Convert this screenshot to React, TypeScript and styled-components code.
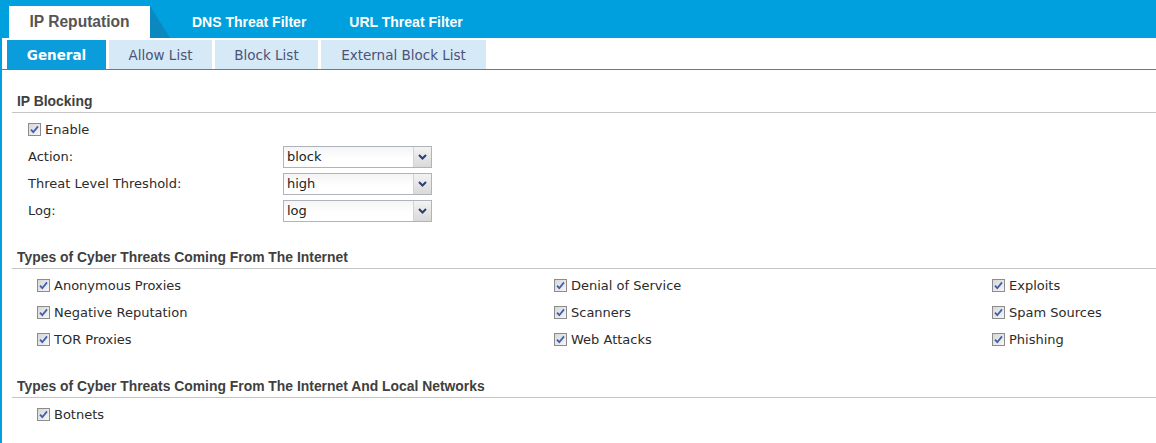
import React from 'react';
import styled, { createGlobalStyle } from 'styled-components';

const BLUE = '#009fdd';

const GlobalStyle = createGlobalStyle`
  html, body {
    margin: 0;
    padding: 0;
    background: #ffffff;
  }
  body {
    font-family: "DejaVu Sans", "Liberation Sans", sans-serif;
    font-size: 13px;
    color: #2b2b2b;
  }
`;

const Page = styled.div`
  min-height: 443px;
  border-left: 2px solid ${BLUE};
  box-sizing: border-box;
  background: #ffffff;
`;

const TopBar = styled.div`
  display: flex;
  align-items: flex-end;
  height: 38px;
  padding-left: 7px;
  background: ${BLUE};
`;

const MainTab = styled.div<{ active?: boolean }>`
  display: flex;
  align-items: center;
  justify-content: center;
  height: ${(p) => (p.active ? '32px' : '38px')};
  width: ${(p) => (p.active ? '141px' : 'auto')};
  padding: ${(p) => (p.active ? '0' : '6px 21px 0 22px')};
  box-sizing: border-box;
  background: ${(p) => (p.active ? '#ffffff' : 'transparent')};
  color: ${(p) => (p.active ? '#555555' : '#ffffff')};
  font-family: "Liberation Sans", sans-serif;
  font-weight: bold;
  font-size: ${(p) => (p.active ? '15.6px' : '14px')};
`;

const TabSlant = styled.div`
  width: 20px;
  height: 32px;
  background: #0c88c0;
  clip-path: polygon(0 0, 100% 100%, 0 100%);
`;

const SubTabBar = styled.div`
  display: flex;
  gap: 3px;
  height: 29px;
  margin-top: 2px;
  padding-left: 5px;
  border-bottom: 1px solid #1f91cb;
`;

const SubTab = styled.div<{ active?: boolean; w: number }>`
  display: flex;
  align-items: center;
  justify-content: center;
  width: ${(p) => p.w}px;
  background: ${(p) => (p.active ? '#0a9cdb' : '#d6e9f7')};
  color: ${(p) => (p.active ? '#ffffff' : '#4b5378')};
  font-weight: ${(p) => (p.active ? 'bold' : 'normal')};
  font-size: 13.5px;
`;

const Section = styled.section`
  margin: 20px 0 0 10px;
  & + & {
    margin-top: 22px;
  }
`;

const SectionTitle = styled.div`
  height: 22px;
  line-height: 22px;
  padding-left: 5px;
  border-bottom: 1px solid #c4c4c4;
  font-family: "Liberation Sans", sans-serif;
  font-weight: bold;
  font-size: 13.9px;
  color: #404040;
`;

const SectionBody = styled.div<{ indent: number }>`
  padding: 3px 0 0 ${(p) => p.indent}px;
`;

const Row = styled.div`
  display: flex;
  align-items: center;
  height: 27px;
`;

const FieldLabel = styled.div`
  width: 255px;
`;

const SelectBox = styled.div`
  display: flex;
  align-items: stretch;
  width: 149px;
  height: 22px;
  box-sizing: border-box;
  border: 1px solid #aeb3bd;
  background: linear-gradient(#f4f4f4, #ffffff 60%);
`;

const SelectValue = styled.div`
  flex: 1;
  display: flex;
  align-items: center;
  padding-left: 3px;
  color: #222222;
`;

const SelectArrow = styled.div`
  display: flex;
  align-items: center;
  justify-content: center;
  width: 17px;
  border-left: 1px solid #d0d3d8;
  background: linear-gradient(#f3f3f3, #d9d9d9);
`;

const CheckGrid = styled.div`
  display: grid;
  grid-template-columns: 517px 438px auto;
`;

const CheckItem = styled.label`
  display: flex;
  align-items: center;
  gap: 4px;
  height: 27px;
`;

function Checkbox() {
  return (
    <svg width="13" height="13" viewBox="0 0 13 13">
      <defs>
        <linearGradient id="cbg" x1="0" y1="0" x2="1" y2="1">
          <stop offset="0" stopColor="#d6d6d6" />
          <stop offset="1" stopColor="#f7f7f7" />
        </linearGradient>
      </defs>
      <rect x="0.5" y="0.5" width="12" height="12" fill="url(#cbg)" stroke="#8c8c8c" />
      <path d="M3 6.6 L5.3 9.2 L10 3.4" fill="none" stroke="#3f5fae" strokeWidth="1.8" />
    </svg>
  );
}

function Chevron() {
  return (
    <svg width="9" height="6" viewBox="0 0 9 6">
      <path d="M1 1 L4.5 4.5 L8 1" fill="none" stroke="#2c3e74" strokeWidth="2" />
    </svg>
  );
}

function Check({ label }: { label: string }) {
  return (
    <CheckItem>
      <Checkbox />
      <span>{label}</span>
    </CheckItem>
  );
}

function Select({ value }: { value: string }) {
  return (
    <SelectBox>
      <SelectValue>{value}</SelectValue>
      <SelectArrow>
        <Chevron />
      </SelectArrow>
    </SelectBox>
  );
}

const internetThreats = [
  'Anonymous Proxies',
  'Denial of Service',
  'Exploits',
  'Negative Reputation',
  'Scanners',
  'Spam Sources',
  'TOR Proxies',
  'Web Attacks',
  'Phishing',
];

export default function App() {
  return (
    <Page>
      <GlobalStyle />
      <TopBar>
        <MainTab active>IP Reputation</MainTab>
        <TabSlant />
        <MainTab>DNS Threat Filter</MainTab>
        <MainTab>URL Threat Filter</MainTab>
      </TopBar>
      <SubTabBar>
        <SubTab active w={99}>General</SubTab>
        <SubTab w={103}>Allow List</SubTab>
        <SubTab w={103}>Block List</SubTab>
        <SubTab w={165}>External Block List</SubTab>
      </SubTabBar>

      <Section>
        <SectionTitle>IP Blocking</SectionTitle>
        <SectionBody indent={16}>
          <Check label="Enable" />
          <Row>
            <FieldLabel>Action:</FieldLabel>
            <Select value="block" />
          </Row>
          <Row>
            <FieldLabel>Threat Level Threshold:</FieldLabel>
            <Select value="high" />
          </Row>
          <Row>
            <FieldLabel>Log:</FieldLabel>
            <Select value="log" />
          </Row>
        </SectionBody>
      </Section>

      <Section>
        <SectionTitle>Types of Cyber Threats Coming From The Internet</SectionTitle>
        <SectionBody indent={25}>
          <CheckGrid>
            {internetThreats.map((t) => (
              <Check key={t} label={t} />
            ))}
          </CheckGrid>
        </SectionBody>
      </Section>

      <Section>
        <SectionTitle>Types of Cyber Threats Coming From The Internet And Local Networks</SectionTitle>
        <SectionBody indent={25}>
          <Check label="Botnets" />
        </SectionBody>
      </Section>
    </Page>
  );
}
